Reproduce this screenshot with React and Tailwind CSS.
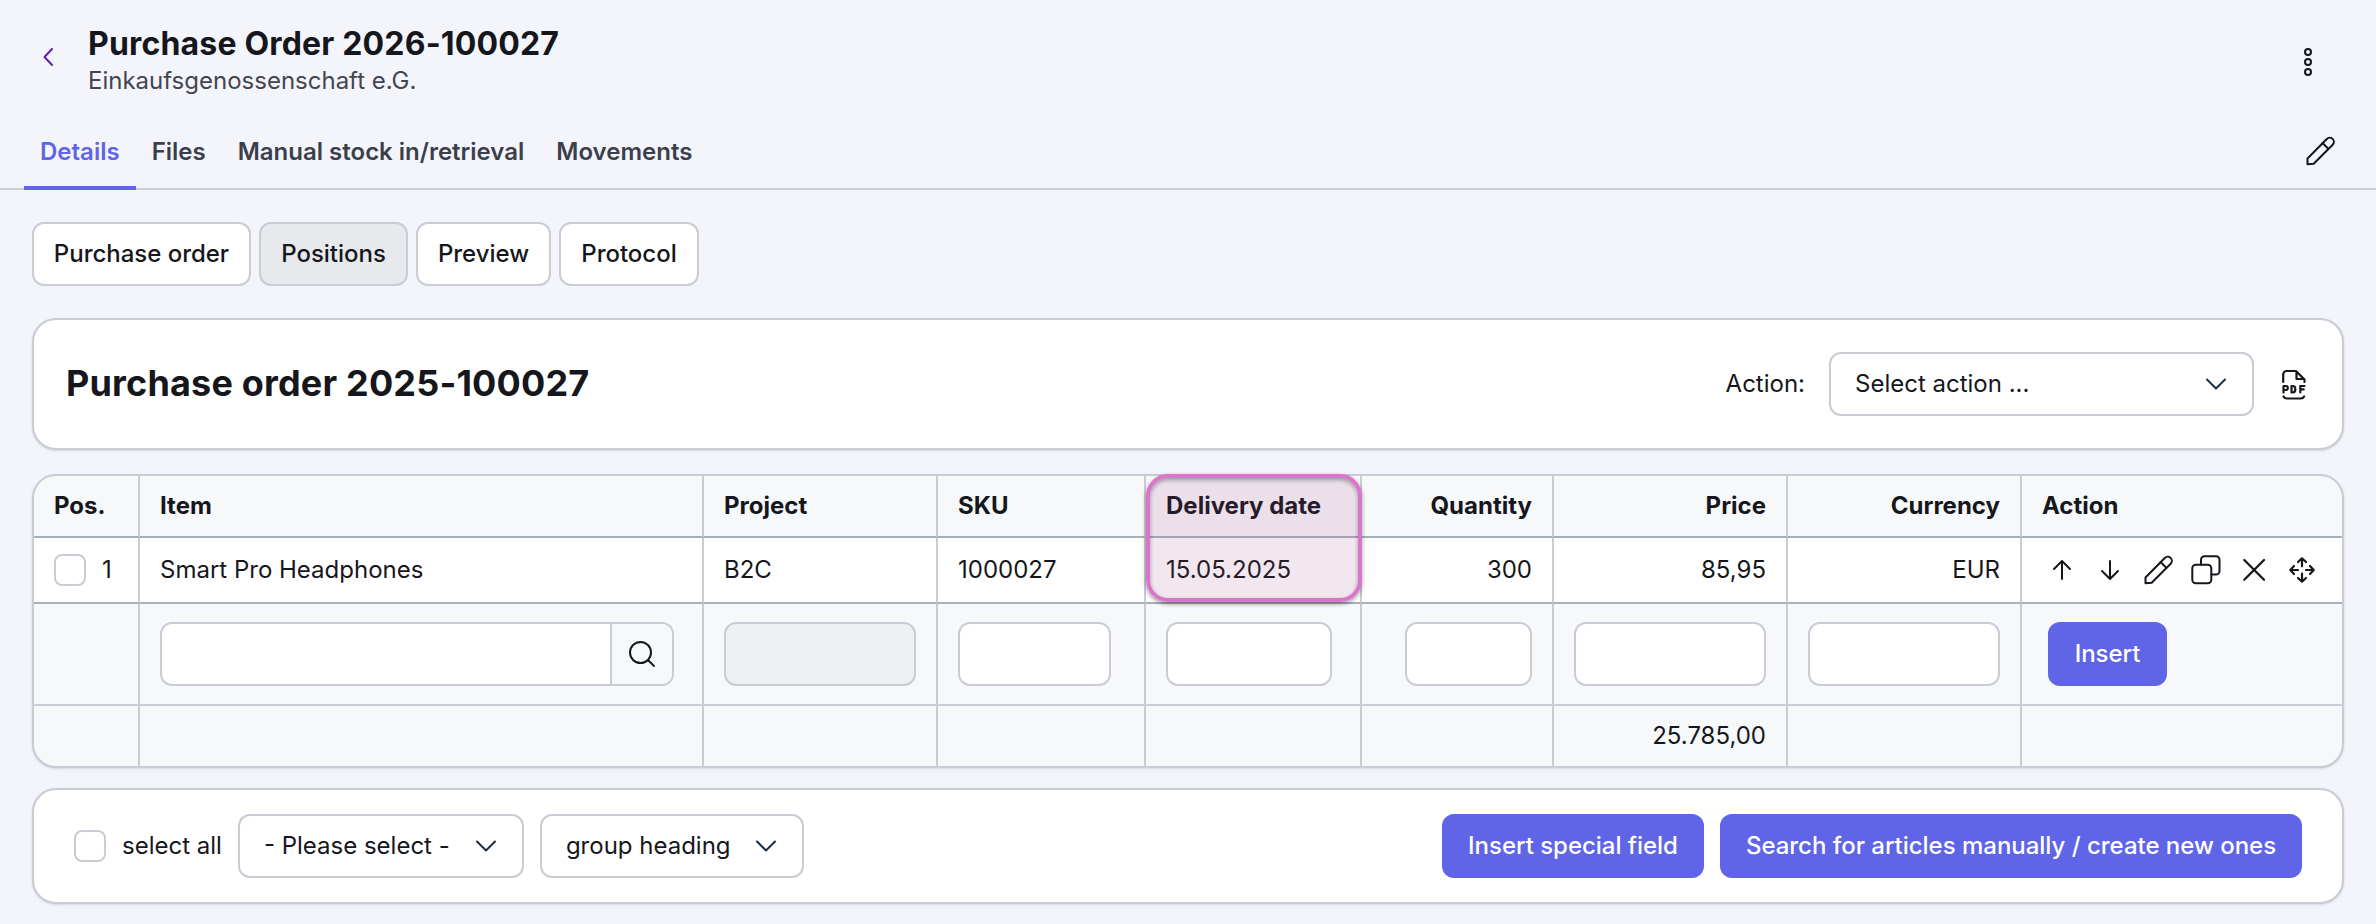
import React, { useState } from 'react'
import clsx from 'clsx'

const TABS = ['Details', 'Files', 'Manual stock in/retrieval', 'Movements']
const SECTIONS = [
  { label: 'Purchase order', width: 'w-[219px]' },
  { label: 'Positions', width: 'w-[149px]' },
  { label: 'Preview', width: 'w-[135px]' },
  { label: 'Protocol', width: 'w-[140px]' },
]

const COLUMNS = [
  { key: 'pos', label: 'Pos.', width: 'w-[106px]' },
  { key: 'item', label: 'Item', width: 'w-[564px]' },
  { key: 'project', label: 'Project', width: 'w-[234px]' },
  { key: 'sku', label: 'SKU', width: 'w-[208px]' },
  { key: 'delivery', label: 'Delivery date', width: 'w-[216px]' },
  { key: 'quantity', label: 'Quantity', width: 'w-[192px]', right: true },
  { key: 'price', label: 'Price', width: 'w-[234px]', right: true },
  { key: 'currency', label: 'Currency', width: 'w-[234px]', right: true },
  { key: 'action', label: 'Action', width: 'w-[320px]' },
]

const ROW = {
  item: 'Smart Pro Headphones',
  project: 'B2C',
  sku: '1000027',
  delivery: '15.05.2025',
  quantity: '300',
  price: '85,95',
  currency: 'EUR',
}

export default function App() {
  const [tab, setTab] = useState('Details')
  const [section, setSection] = useState('Positions')

  return (
    <div className="h-[924px] w-[2376px] overflow-hidden bg-[#f4f5fb] font-['Inter',sans-serif] text-2xl leading-8 text-[#15171c]">
      <header className="flex h-[122px] items-start justify-between pl-10 pr-[60px]">
        <div className="flex items-start">
          <button className="mt-[46px] text-[#5b21a6]">
            <Icon className="block h-[22px] w-4" box="0 0 16 22"><path d="M12 3 4.500 11l7.500 8" /></Icon>
          </button>
          <div className="ml-8 pt-6">
            <h1 className="text-[32px] font-bold leading-10 tracking-[0.18px]">Purchase Order 2026-100027</h1>
            <p className="mt-px text-[#434651]">Einkaufsgenossenschaft e.G.</p>
          </div>
        </div>
        <button className="mt-[46px]">
          <Icon className="block h-8 w-4" box="0 0 16 32">
            <circle cx="8" cy="6" r="3" />
            <circle cx="8" cy="16" r="3" />
            <circle cx="8" cy="26" r="3" />
          </Icon>
        </button>
      </header>

      <nav className="flex h-[68px] justify-between border-b-2 border-[#c9ccd4] pl-6 pr-10">
        <div className="flex">
          {TABS.map((t) => (
            <button key={t} onClick={() => setTab(t)}
              className={clsx('-mb-0.5 h-[68px] border-b-4 px-4 pb-1 font-semibold', tab === t ? 'border-[#5f65e6] text-[#5f65e6]' : 'border-transparent text-[#3b3f4c]')}>
              {t}
            </button>
          ))}
        </div>
        <button className="mb-[21px] self-end"><Pencil /></button>
      </nav>

      <main className="px-8 pt-8">
        <div className="flex gap-2">
          {SECTIONS.map((s) => (
            <button key={s.label} onClick={() => setSection(s.label)}
              className={clsx('h-16 whitespace-nowrap rounded-xl border-2 border-[#c9ccd4] font-medium tracking-[-0.02px]', s.width, section === s.label ? 'bg-[#e8e9ed]' : 'bg-white')}>
              {s.label}
            </button>
          ))}
        </div>

        <section className="mt-8 flex h-[132px] items-center rounded-3xl border-2 border-[#c9ccd4] bg-white pl-8 pr-8 shadow-sm">
          <h2 className="pb-0.5 text-4xl font-bold tracking-[0.18px]">Purchase order 2025-100027</h2>
          <span className="ml-auto mr-6">Action:</span>
          <Select label="Select action ..." className="w-[425px]" />
          <button className="ml-6"><PdfIcon /></button>
        </section>

        <Positions />

        <section className="mt-5 flex h-[116px] items-center rounded-3xl border-2 border-[#c9ccd4] bg-white px-10 shadow-sm">
          <Checkbox />
          <span className="ml-4 mr-4">select all</span>
          <Select label="- Please select -" className="mr-4 w-[286px]" />
          <Select label="group heading" className="w-[264px]" />
          <PrimaryButton className="ml-auto mr-4 w-[262px]">Insert special field</PrimaryButton>
          <PrimaryButton className="w-[582px]">Search for articles manually / create new ones</PrimaryButton>
        </section>
      </main>
    </div>
  )
}

function Positions() {
  return (
    <section className="relative mt-6 h-[294px] rounded-3xl border-2 border-[#c9ccd4] bg-[#f7f8fa] shadow-sm">
      <div className="overflow-hidden rounded-[22px]">
        <table className="w-[2308px] table-fixed border-separate border-spacing-0">
          <thead>
            <tr className="h-[62px]">
              {COLUMNS.map((c) => (
                <th key={c.key} className={clsx('border-b-2 border-r-2 border-b-[#a9aebb] border-r-[#c9ccd4] px-5 py-0 font-bold last:border-r-0', c.width, c.right ? 'text-right' : 'text-left')}>
                  {c.label}
                </th>
              ))}
            </tr>
          </thead>
          <tbody>
            <tr className="h-[66px] bg-white">
              {COLUMNS.map((c) => (
                <td key={c.key} className={clsx('border-b-2 border-r-2 border-b-[#a9aebb] border-r-[#c9ccd4] px-5 py-0 last:border-r-0', c.right && 'text-right')}>
                  {c.key === 'pos' && <div className="flex items-center gap-4"><Checkbox />1</div>}
                  {c.key === 'action' && <RowActions />}
                  {ROW[c.key]}
                </td>
              ))}
            </tr>
            <tr className="h-[102px]">
              <FormCell />
              <FormCell>
                <div className="flex h-16 w-[514px] overflow-hidden rounded-xl border-2 border-[#c9ccd4] bg-white">
                  <input className="min-w-0 flex-1 px-4 outline-none" />
                  <button className="flex w-[62px] items-center justify-center border-l-2 border-[#c9ccd4] bg-[#f7f8fa]">
                    <Icon className="size-8"><circle cx="14.500" cy="14.500" r="10.500" /><path d="m22.500 22.500 5.500 5.500" /></Icon>
                  </button>
                </div>
              </FormCell>
              <FormCell><Input disabled className="w-48 bg-[#eff0f2]" /></FormCell>
              <FormCell><Input className="w-[153px] bg-white" /></FormCell>
              <FormCell><Input className="w-[166px] bg-white" /></FormCell>
              <FormCell><Input className="ml-auto w-[127px] bg-white" /></FormCell>
              <FormCell><Input className="w-48 bg-white" /></FormCell>
              <FormCell><Input className="w-48 bg-white" /></FormCell>
              <FormCell><PrimaryButton className="ml-1.5 w-[119px]">Insert</PrimaryButton></FormCell>
            </tr>
            <tr className="h-[60px]">
              {COLUMNS.map((c) => (
                <td key={c.key} className="border-r-2 border-[#c9ccd4] px-5 py-0 text-right last:border-r-0">
                  {c.key === 'price' && '25.785,00'}
                </td>
              ))}
            </tr>
          </tbody>
        </table>
      </div>
      {/* marks the delivery date column */}
      <div className="pointer-events-none absolute -top-0.5 left-[1112px] h-32 w-[216px] rounded-[22px] border-4 border-[#d975cb] bg-[#9a3c82]/13 shadow-[0_2px_4px_rgba(0,0,0,0.4),inset_0_2px_4px_rgba(0,0,0,0.35)]" />
    </section>
  )
}

function FormCell({ children }) {
  return <td className="border-b-2 border-r-2 border-[#c9ccd4] px-5 py-0 last:border-r-0">{children}</td>
}

function Input({ className, disabled }) {
  return <input disabled={disabled} className={clsx('block h-16 rounded-xl border-2 border-[#c9ccd4] px-4 outline-none', className)} />
}

function Checkbox() {
  return <input type="checkbox" className="size-8 shrink-0 appearance-none rounded-lg border-2 border-[#c9ccd4] bg-white" />
}

function Select({ label, className }) {
  return (
    <button className={clsx('flex h-16 items-center justify-between rounded-xl border-2 border-[#c9ccd4] bg-white px-6', className)}>
      {label}
      <Icon className="h-4 w-6 text-[#1e2b45]" box="0 0 24 16"><path d="m3 3.500 9 9 9-9" /></Icon>
    </button>
  )
}

function PrimaryButton({ children, className }) {
  return (
    <button className={clsx('h-16 whitespace-nowrap rounded-xl bg-[#5f65e6] font-medium tracking-[-0.02px] text-white', className)}>{children}</button>
  )
}

function RowActions() {
  return (
    <div className="flex items-center gap-4 pl-1">
      <Icon className="size-8"><path d="M16 25V7M8 15l8-8 8 8" /></Icon>
      <Icon className="size-8"><path d="M16 7v18M8 17l8 8 8-8" /></Icon>
      <Pencil />
      <Icon className="size-8">
        <rect x="2.300" y="10.800" width="19" height="18.500" rx="3.500" />
        <path d="M11 10.800V5.800a3.500 3.500 0 0 1 3.500-3.500H26A3.500 3.500 0 0 1 29.500 5.800V17a3.500 3.500 0 0 1-3.500 3.500h-4.700" />
      </Icon>
      <Icon className="size-8" stroke="2.300"><path d="m6.300 6 19.700 19.700M26 6 6.300 25.700" /></Icon>
      <Icon className="size-8" stroke="2.200">
        <path d="M16 4.300v8M12 8l4-3.700L20 8M16 27.700v-8M12 24l4 3.700 4-3.700M4.500 16h7.500M8 12l-3.700 4L8 20M27.500 16H20M24 12l3.700 4-3.700 4" />
      </Icon>
    </div>
  )
}

function Pencil() {
  return (
    <Icon className="size-8">
      <path d="M3.500 29.200V23.500L22.800 4a4.100 4.100 0 0 1 5.900 5.700L9.700 28.700z" />
      <path d="m18.500 8 5.800 5.800" />
    </Icon>
  )
}

function PdfIcon() {
  return (
    <Icon className="size-8" stroke="2.200">
      <path d="M5.200 14V6.500A3.500 3.500 0 0 1 8.700 3H18l8.500 8.500V14M18.500 3.500V11h7.500M5.500 28.500c.8 1.500 1.800 2 3.300 2h14c1.500 0 2.500-.5 3.300-2" />
      <path d="M5.500 24.500v-6.500h2.300a2 2 0 0 1 0 4H5.500M13.500 18v6.500h1.300c3.400 0 3.400-6.500 0-6.500zM22.300 24.500V18h4.200M22.300 21.400h3.400" />
    </Icon>
  )
}

function Icon({ children, className, stroke = '2', box = '0 0 32 32' }) {
  return (
    <svg viewBox={box} fill="none" stroke="currentColor" strokeWidth={stroke} strokeLinecap="round" strokeLinejoin="round" className={className}>
      {children}
    </svg>
  )
}
